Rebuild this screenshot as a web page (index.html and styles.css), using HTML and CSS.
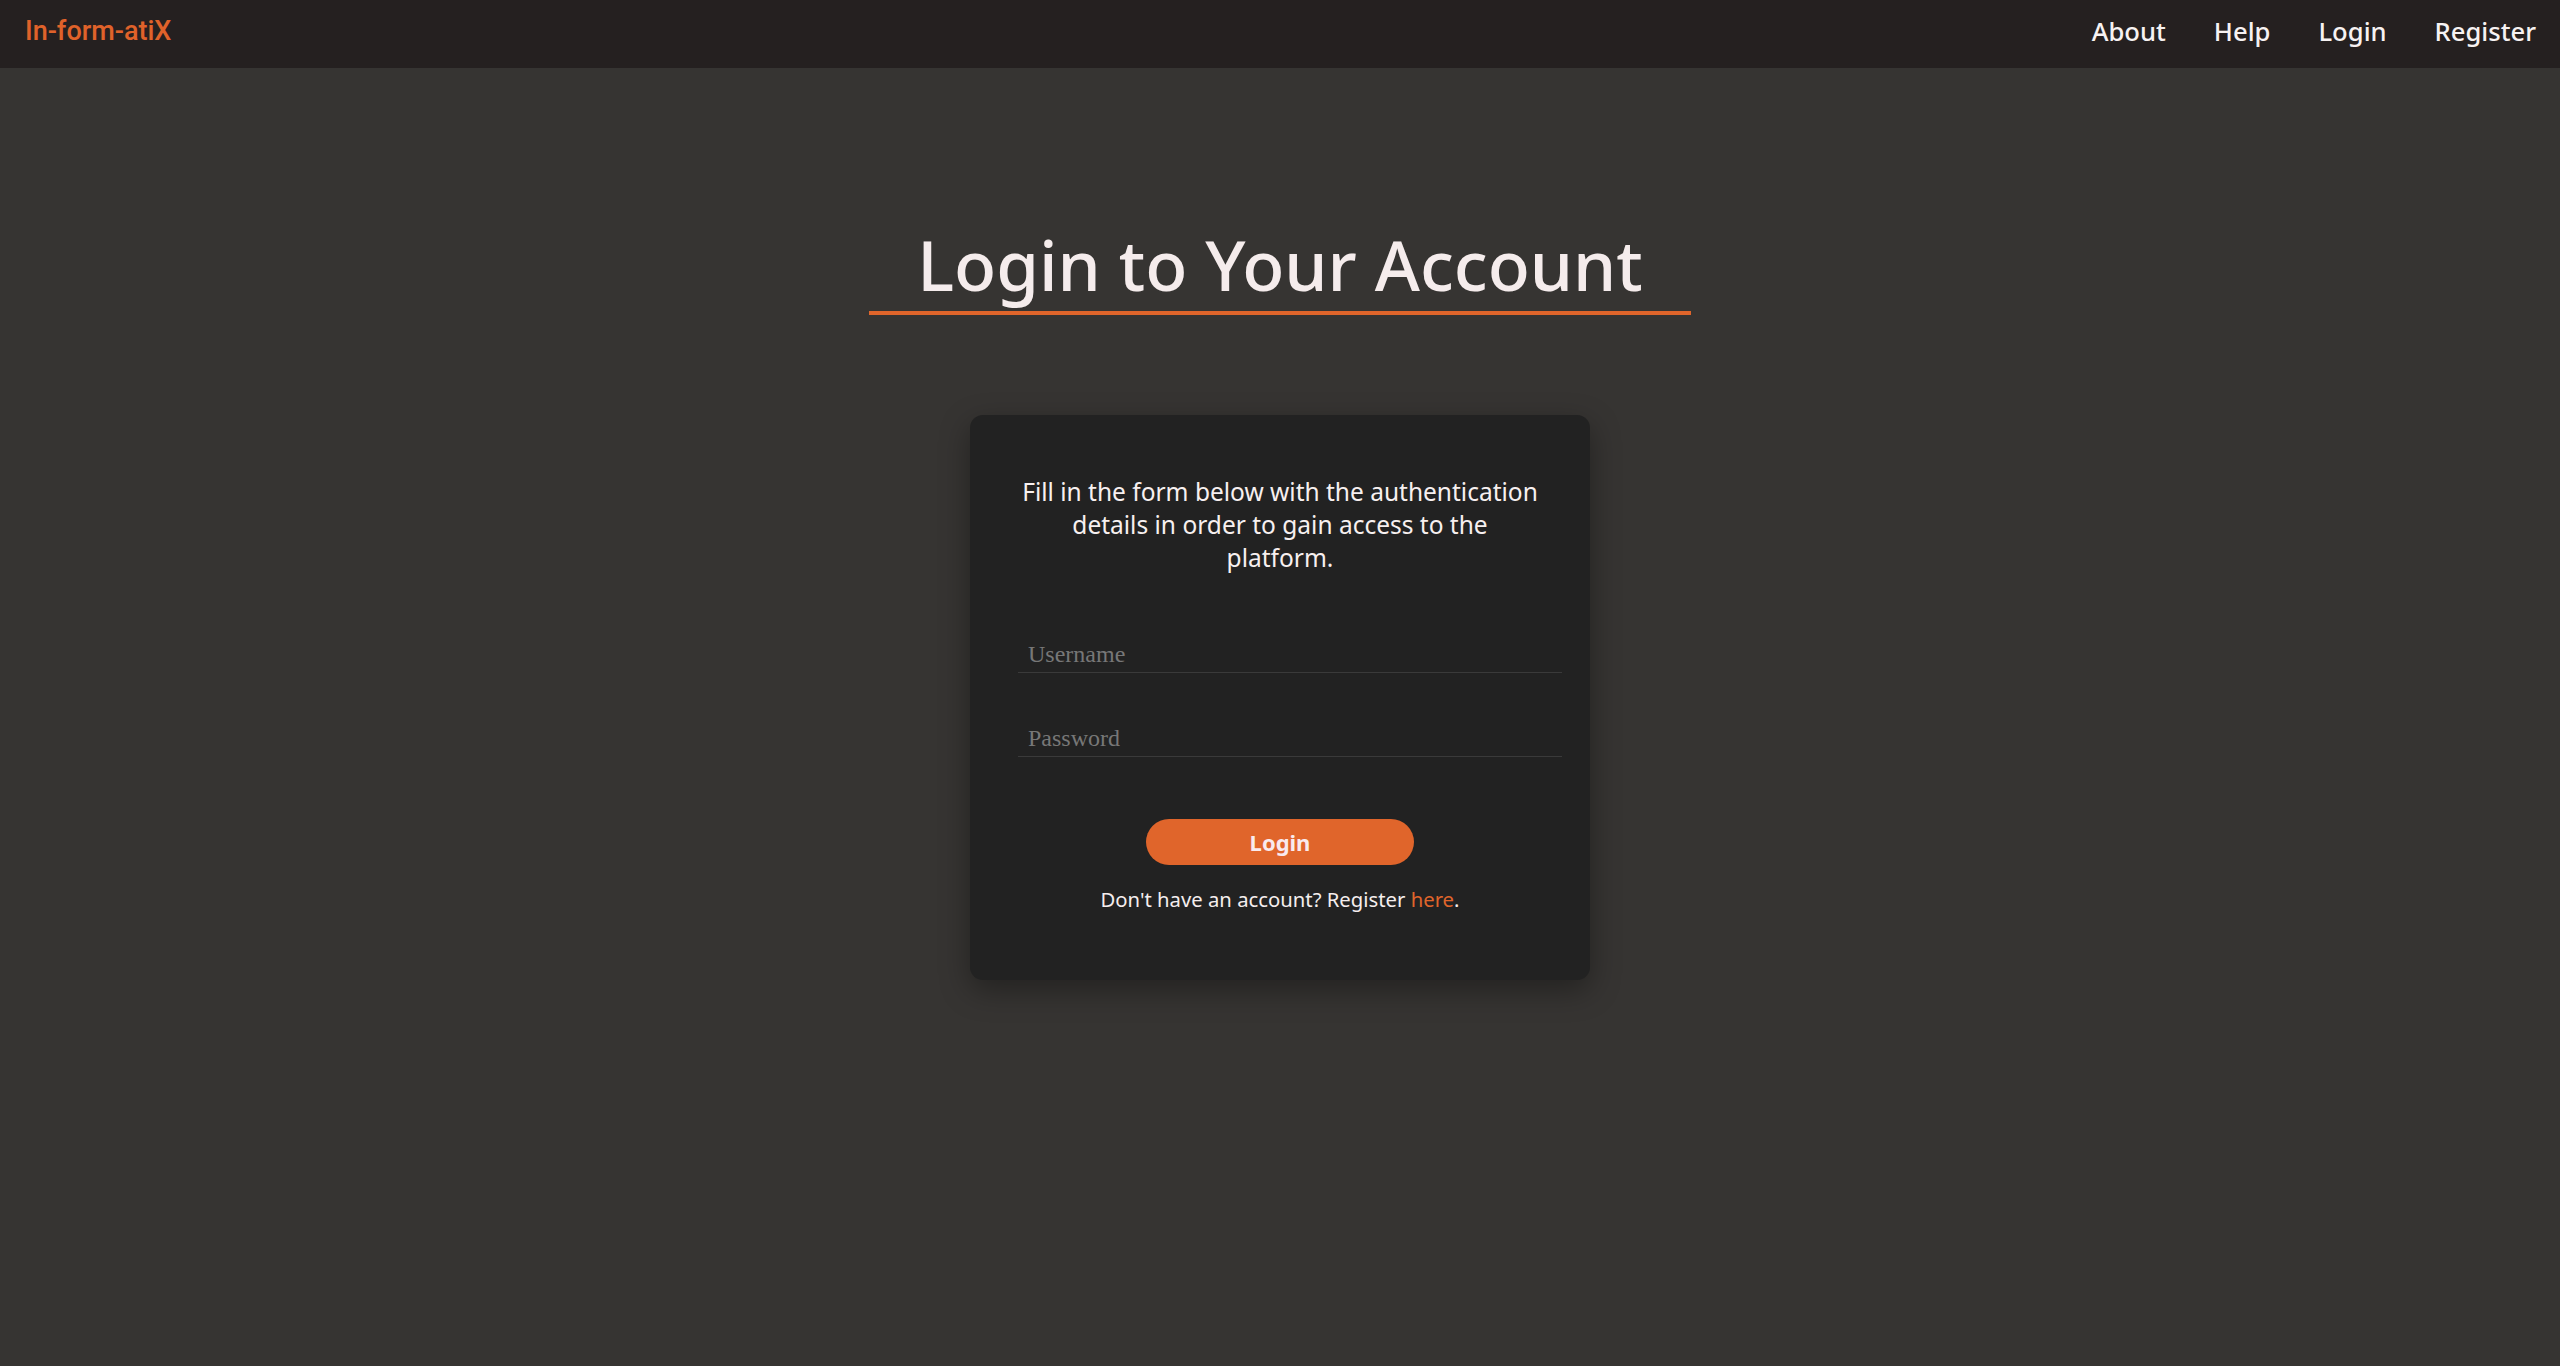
FILE: index.html
```html
<!DOCTYPE html>
<html lang="en">
<head>
<meta charset="utf-8">
<title>Login - In-form-atiX</title>
<link rel="stylesheet" href="styles.css">
</head>
<body>
<header class="navbar">
  <a class="brand" href="#">In-form-atiX</a>
  <nav class="nav-links">
    <a href="#">About</a>
    <a href="#">Help</a>
    <a href="#">Login</a>
    <a href="#">Register</a>
  </nav>
</header>
<main class="page">
  <h1 class="page-title">Login to Your Account</h1>
  <section class="card">
    <p class="intro">Fill in the form below with the authentication details in order to gain access to the platform.</p>
    <form class="login-form">
      <input class="field" type="text" placeholder="Username">
      <input class="field" type="password" placeholder="Password">
      <button class="btn-login" type="button">Login</button>
    </form>
    <p class="signup">Don't have an account? Register <a href="#">here</a>.</p>
  </section>
</main>
</body>
</html>
```
FILE: styles.css
```css
html, body {
  margin: 0;
  padding: 0;
}
body {
  background: #363432;
  font-family: "Noto Sans", "Open Sans", sans-serif;
  color: #f5ecec;
  min-height: 100vh;
}
a {
  text-decoration: none;
}
.navbar {
  height: 68px;
  background: #252020;
  display: flex;
  align-items: center;
  justify-content: space-between;
  padding: 0 24px 0 25px;
}
.brand {
  font-family: Roboto, "Liberation Sans", sans-serif;
  font-weight: 500;
  font-size: 27px;
  color: #e0622a;
  margin-top: -6px;
}
.nav-links {
  display: flex;
  gap: 48px;
  margin-top: -5px;
}
.nav-links a {
  color: #f7f2f2;
  font-size: 25.6px;
  font-weight: 500;
}
.page {
  display: flex;
  flex-direction: column;
  align-items: center;
  padding-top: 149px;
}
.page-title {
  margin: 0;
  font-size: 69px;
  font-weight: 500;
  line-height: normal;
  color: #f5ecec;
  padding: 0 48px;
  border-bottom: 4px solid #e0652b;
}
.card {
  margin-top: 100px;
  width: 524px;
  padding: 60px 48px 67px;
  background: #222222;
  border-radius: 13px;
  box-shadow: 0 10px 30px rgba(0, 0, 0, 0.35);
}
.intro {
  margin: 0 auto;
  max-width: 518px;
  text-align: center;
  font-size: 24.5px;
  line-height: 33px;
  color: #f7f0f0;
}
.login-form {
  display: flex;
  flex-direction: column;
  align-items: flex-start;
  margin-top: 63px;
}
.field {
  width: 100%;
  box-sizing: content-box;
  padding: 4px 10px;
  margin: 0 0 48px;
  border: none;
  border-bottom: 1px solid #3a3a3a;
  background: transparent;
  font-family: "Liberation Serif", serif;
  font-size: 24px;
  color: #dddddd;
  outline: none;
}
.field::placeholder {
  color: #777777;
}
.field + .field {
  margin-bottom: 62px;
}
.btn-login {
  align-self: center;
  width: 268px;
  height: 46px;
  border: none;
  border-radius: 23px;
  background: #e0652b;
  color: #f9eaee;
  font-family: "Noto Sans", "Open Sans", sans-serif;
  font-weight: 700;
  font-size: 22px;
}
.signup {
  margin: 20px 0 0;
  text-align: center;
  font-size: 20.3px;
  color: #f5eeee;
}
.signup a {
  color: #e0652b;
}
```
